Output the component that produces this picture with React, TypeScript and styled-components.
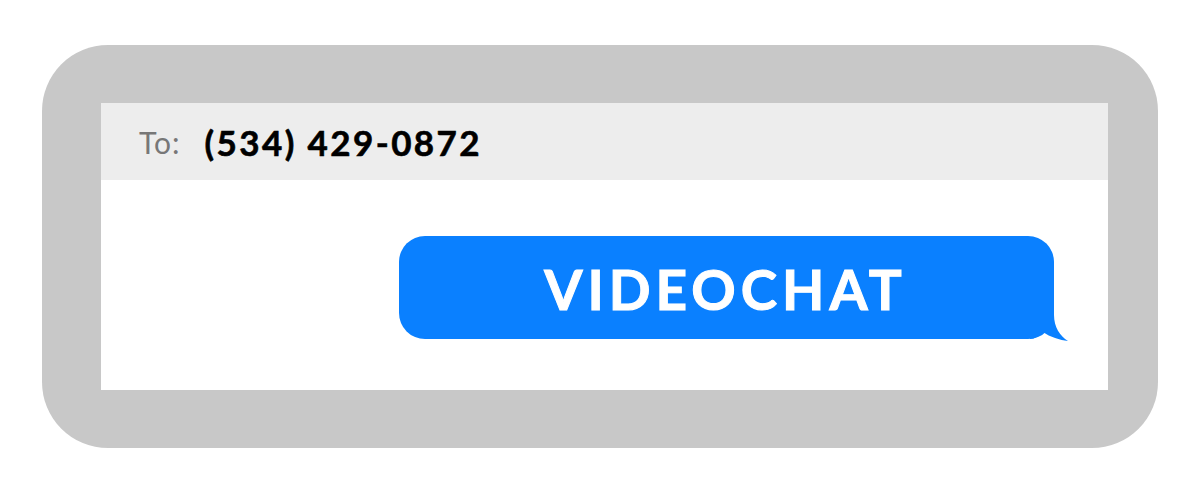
import React from "react";
import styled, { createGlobalStyle } from "styled-components";

const Global = createGlobalStyle`
  html, body { margin: 0; padding: 0; background: #ffffff; }
  body { font-family: "Lato", "Open Sans", sans-serif; }
`;

const Page = styled.div`
  width: 1200px;
  height: 498px;
  padding: 45px 0 0 42px;
  box-sizing: border-box;
`;

const Frame = styled.div`
  width: 1116px;
  height: 403px;
  box-sizing: border-box;
  background: #c8c8c8;
  border-radius: 66px;
  padding: 58px 50px 58px 59px;
  display: flex;
`;

const Screen = styled.div`
  flex: 1;
  background: #ffffff;
  display: flex;
  flex-direction: column;
`;

const Header = styled.div`
  height: 77px;
  background: #ededed;
  display: flex;
  align-items: center;
  padding-left: 38px;
  gap: 24px;
`;

const ToLabel = styled.span`
  font-family: "Lato", sans-serif;
  font-size: 30px;
  letter-spacing: 1px;
  color: #777777;
`;

const Phone = styled.span`
  font-family: "Lato", sans-serif;
  font-weight: 700;
  font-size: 35px;
  letter-spacing: 2.4px;
  color: #000000;
  -webkit-text-stroke: 0.6px #000000;
`;

const Body = styled.div`
  padding: 56px 0 0 298px;
`;

const Bubble = styled.div`
  position: relative;
  width: 655px;
  height: 103px;
  background: #0a80ff;
  border-radius: 26px;
  display: flex;
  align-items: center;
  justify-content: center;
`;

const BubbleText = styled.span`
  font-family: "Lato", sans-serif;
  font-weight: 700;
  font-size: 55px;
  letter-spacing: 5px;
  color: #ffffff;
  padding-right: 2px;
  margin-top: 2px;
  -webkit-text-stroke: 1px #ffffff;
`;

const Tail = styled.svg`
  position: absolute;
  right: -16px;
  bottom: -3px;
  width: 40px;
  height: 60px;
`;

export default function App() {
  return (
    <>
      <Global />
      <Page>
        <Frame>
          <Screen>
            <Header>
              <ToLabel>To:</ToLabel>
              <Phone>(534) 429-0872</Phone>
            </Header>
            <Body>
              <Bubble>
                <BubbleText>VIDEOCHAT</BubbleText>
                <Tail viewBox="0 0 40 60">
                  <path
                    d="M0 0 L24 0 L24 33 C24 45 30 54 38 59 C30 58 20 55 13 50 C9 54 5 57 0 57 Z"
                    fill="#0a80ff"
                  />
                </Tail>
              </Bubble>
            </Body>
          </Screen>
        </Frame>
      </Page>
    </>
  );
}
